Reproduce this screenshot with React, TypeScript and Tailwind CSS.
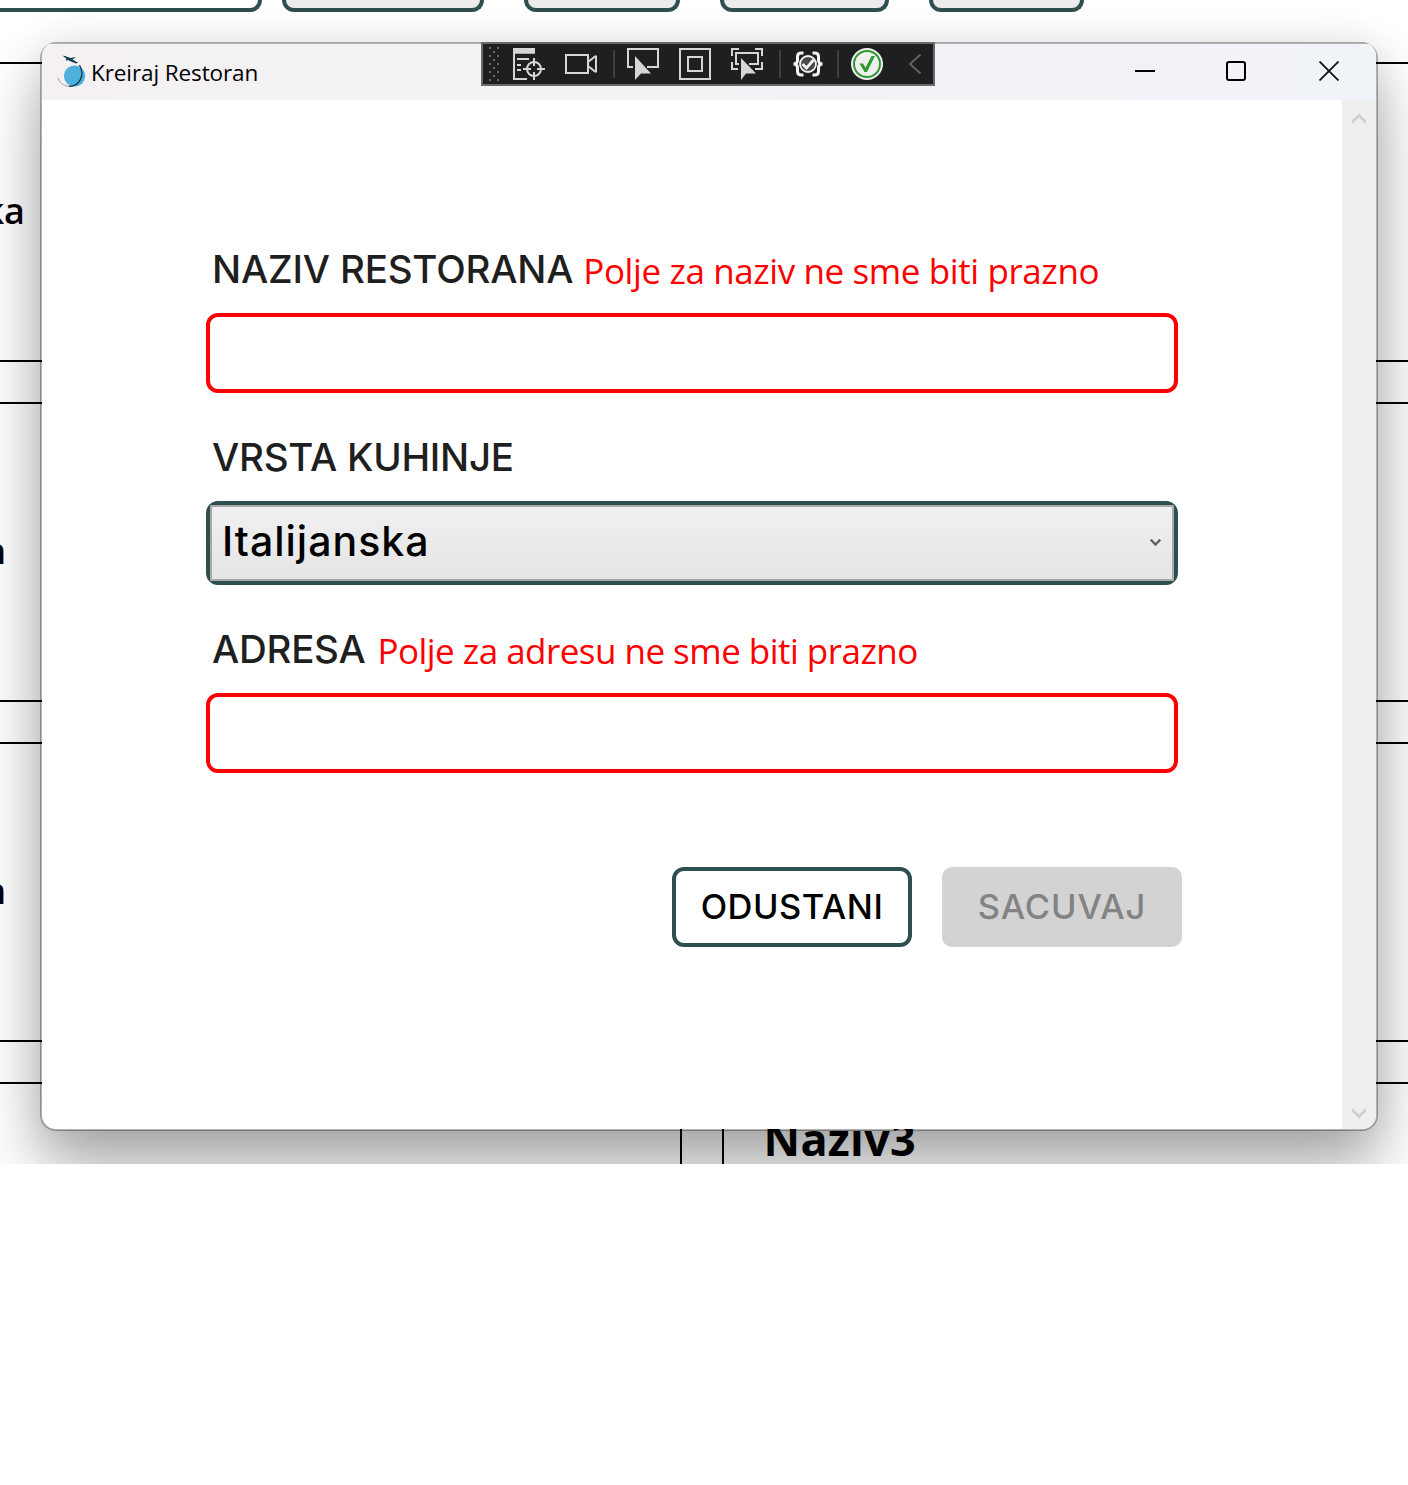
import React from "react";

const SEGOE = "font-['Open_Sans',sans-serif]";
const GEO = "font-['Inter',sans-serif] font-medium";

function Card({ side, children }: { side: "left" | "right"; children?: React.ReactNode }) {
  return (
    <div
      className={
        side === "left"
          ? "-ml-10 flex h-[300px] items-center border-2 border-black pl-[38px]"
          : "-mr-10 h-[300px] border-2 border-black"
      }
    >
      {children}
    </div>
  );
}

function Background() {
  return (
    <div className="h-full w-full overflow-hidden bg-white">
      <div className="flex h-3">
        <div className="w-[262px] rounded-br-xl border-b-4 border-r-4 border-[#2f4f4f]" />
        <div className="ml-5 w-[202px] rounded-b-xl border-4 border-t-0 border-[#2f4f4f] bg-[#ececec]" />
        <div className="ml-10 w-[156px] rounded-b-xl border-4 border-t-0 border-[#2f4f4f] bg-[#ececec]" />
        <div className="ml-10 w-[169px] rounded-b-xl border-4 border-t-0 border-[#2f4f4f] bg-[#ececec]" />
        <div className="ml-10 w-[155px] rounded-b-xl border-4 border-t-0 border-[#2f4f4f] bg-[#ececec]" />
      </div>
      <div className="mt-[50px] grid grid-cols-[682px_1fr] gap-10">
        <Card side="left">
          <div className="mb-0.5 flex w-[25px] justify-end text-[36px] font-semibold leading-[50px]">ka</div>
        </Card>
        <Card side="right" />
        <Card side="left">
          <div className="mb-0.5 flex w-[6px] justify-end text-[36px] font-semibold leading-[50px]">n</div>
        </Card>
        <Card side="right" />
        <Card side="left">
          <div className="mb-0.5 flex w-[6px] justify-end text-[36px] font-semibold leading-[50px]">n</div>
        </Card>
        <Card side="right" />
        <Card side="left" />
        <Card side="right">
          <h2 className="pl-[39.5px] pt-[27px] text-[45px] font-bold leading-[56px] tracking-[0.3px]">Naziv3</h2>
        </Card>
      </div>
    </div>
  );
}

function AppLogo() {
  return (
    <svg width="30" height="34" viewBox="0 0 30 34" fill="none">
      <circle cx="17.6" cy="21" r="10.6" fill="#4db1dc" />
      <path d="M1 23C2.500 29 9.500 32.500 16 31" stroke="#8b9499" strokeWidth=".9" />
      <path d="M12 31.300C22 31.500 28.500 21 22.500 10" stroke="#123c50" strokeWidth="1.300" />
      <path d="M6.500 .5L13.500 3L19 2L15.500 4.400L20.500 7.400L21.500 7L19.500 8.500L15 6.900L11 5L8.500 5.700L9.500 3.700L6.500 1.600Z" fill="#123c50" />
    </svg>
  );
}

function DebugToolbar() {
  return (
    <div className="absolute left-[439px] top-[-2px] flex h-[44px] w-[454px] items-center border-2 border-[#69696b] bg-[#1f1f1f] text-[#d6d6d6]">
      <svg className="ml-[5px] shrink-0" width="12" height="36" viewBox="0 0 12 36" fill="#6b6b6b">
        {[1, 9, 17, 25, 33].map((y) => (
          <g key={y}>
            <rect x="1" y={y} width="2" height="2" />
            <rect x="9" y={y} width="2" height="2" />
            {y < 33 && <rect x="5" y={y + 4} width="2" height="2" />}
          </g>
        ))}
      </svg>
      <svg className="ml-[13px] shrink-0" width="32" height="32" viewBox="0 0 32 32" fill="none" stroke="currentColor" strokeWidth="2">
        <path d="M0 0H22V5.700H0Z" fill="currentColor" stroke="none" />
        <path d="M1 0V31H14M4 11H16M4 17H8M4 22H8" />
        <circle cx="21" cy="21" r="7" />
        <path d="M10 21H18M24 21H32M21 10V18M21 24V32" />
      </svg>
      <svg className="ml-5 shrink-0" width="32" height="32" viewBox="0 0 32 32" fill="none" stroke="currentColor" strokeWidth="2">
        <rect x="1" y="7" width="22" height="18" />
        <path d="M23 14L30 8.500H31V23.500H30L23 18" />
      </svg>
      <div className="ml-4 h-7 w-0.5 shrink-0 bg-[#3d3d3d]" />
      <svg className="ml-3 shrink-0" width="32" height="32" viewBox="0 0 32 32" fill="none" stroke="currentColor" strokeWidth="2">
        <path d="M6 19H1V1H31V19H20" />
        <path d="M8 8V32L14 25.500H24Z" fill="currentColor" stroke="none" />
      </svg>
      <svg className="ml-5 shrink-0" width="32" height="32" viewBox="0 0 32 32" fill="none" stroke="currentColor" strokeWidth="2">
        <rect x="1" y="1" width="30" height="30" />
        <rect x="9" y="9" width="14" height="14" />
      </svg>
      <svg className="ml-5 shrink-0" width="32" height="32" viewBox="0 0 32 32" fill="none" stroke="currentColor" strokeWidth="2">
        <path d="M1 8V1H8M24 1H31V8M31 14V21H24M1 14V21H7" />
        <path d="M8 16H5V5H27V16H18" />
        <path d="M10 10V32L15 25.500H25Z" fill="currentColor" stroke="none" />
      </svg>
      <div className="ml-4 h-7 w-0.5 shrink-0 bg-[#3d3d3d]" />
      <svg className="ml-[11px] shrink-0" width="32" height="32" viewBox="0 0 32 32" fill="none" stroke="#f4f4f4" strokeWidth="3">
        <path d="M11.500 5H9.500C7 5 5.500 6 5.500 8.500V12C5.500 14.500 4.500 16 1.500 16C4.500 16 5.500 17.500 5.500 20V23.500C5.500 26 7 27 9.500 27H11.500" />
        <path d="M20.500 5H22.500C25 5 26.500 6 26.500 8.500V12C26.500 14.500 27.500 16 30.500 16C27.500 16 26.500 17.500 26.500 20V23.500C26.500 26 25 27 22.500 27H20.500" />
        <circle cx="16" cy="16" r="8" fill="#4a4a4a" strokeWidth="1.800" />
        <path d="M10.500 16L14.500 20L21.500 12" strokeWidth="2.800" />
      </svg>
      <div className="ml-[13px] h-7 w-0.5 shrink-0 bg-[#3d3d3d]" />
      <svg className="ml-3 shrink-0" width="32" height="32" viewBox="0 0 32 32" fill="none">
        <circle cx="16" cy="16" r="16" fill="#f0f0f0" />
        <circle cx="16" cy="16" r="13" stroke="#2f9a32" strokeWidth="2" />
        <path d="M8.500 15.500H12L14.500 19.800L20.500 8H24L16 24H13.500Z" fill="#2f9a32" />
      </svg>
      <svg className="ml-[25px] shrink-0" width="14" height="22" viewBox="0 0 14 22" fill="none" stroke="#656565" strokeWidth="1.800">
        <path d="M12.500 1.500L2 11L12.500 20.500" />
      </svg>
    </div>
  );
}

function TitleBar() {
  return (
    <div className="relative flex h-14 shrink-0 items-center bg-linear-to-r from-[#f5f1f3] to-[#f0f3f8] pl-[15px]">
      <AppLogo />
      <span className="ml-[4px] grow pt-0.5 text-[22.5px] leading-8 tracking-[-0.1px]">Kreiraj Restoran</span>
      <DebugToolbar />
      <div className="mb-0.5 flex">
        <div className="flex w-[91px] justify-center">
          <svg width="20" height="20" viewBox="0 0 20 20" stroke="#000" strokeWidth="2"><path d="M0 10H20" /></svg>
        </div>
        <div className="flex w-[92px] justify-center">
          <svg width="20" height="20" viewBox="0 0 20 20" fill="none" stroke="#000" strokeWidth="2"><rect x="1" y="1" width="18" height="18" rx="2" /></svg>
        </div>
        <div className="flex w-[94px] justify-center">
          <svg width="20" height="20" viewBox="0 0 20 20" stroke="#111" strokeWidth="1.800"><path d="M.5 .5L19.500 19.500M19.500 .5L.5 19.500" /></svg>
        </div>
      </div>
    </div>
  );
}

function ScrollBar() {
  return (
    <div className="flex w-[34px] shrink-0 flex-col items-center justify-between bg-[#efefef] pb-[9px] pt-3">
      <svg width="14" height="12" viewBox="0 0 14 12" fill="none" stroke="#d0d0d0" strokeWidth="2.800"><path d="M0 10.500L7 3.500L14 10.500" /></svg>
      <svg width="14" height="12" viewBox="0 0 14 12" fill="none" stroke="#d0d0d0" strokeWidth="2.800"><path d="M0 1.500L7 8.500L14 1.500" /></svg>
    </div>
  );
}

function RestaurantForm() {
  return (
    <form className="ml-[164px] mt-[139px] flex w-[976px] flex-col text-[#1f1f1f]">
      <label className="flex h-[60px] items-baseline gap-[10px] whitespace-nowrap pl-[6px] leading-[60px]">
        <span className={`${GEO} text-[38.5px] tracking-[-0.2px]`}>NAZIV RESTORANA</span>
        <span className="translate-y-px text-[35px] tracking-[-0.4px] text-[#ff0000]">Polje za naziv ne sme biti prazno</span>
      </label>
      <input className="mt-3.5 h-20 w-[972px] rounded-xl border-4 border-[#ff0000] bg-white px-3 text-4xl outline-none" />

      <label className="mt-[34px] flex h-[60px] items-baseline whitespace-nowrap pl-[6px] leading-[60px]">
        <span className={`${GEO} text-[38.5px] tracking-[-0.25px]`}>VRSTA KUHINJE</span>
      </label>
      <div className="mt-3.5 h-[84px] w-[972px] rounded-xl bg-[#2f4f4f] p-1">
        <div className="flex h-full items-center justify-between border-2 border-[#a9a9a9] bg-linear-to-b from-[#f0f0f0] to-[#e5e5e5] pl-2.5 pr-[11px]">
          <span className={`${GEO} mb-1 text-[41px] leading-[60px] tracking-[1px] text-black`}>Italijanska</span>
          <svg className="mb-0.5" width="11" height="9" viewBox="0 0 11 9" fill="none" stroke="#606060" strokeWidth="2.400"><path d="M.7 1.500L5.500 6.500L10.300 1.500" /></svg>
        </div>
      </div>

      <label className="mt-[34px] flex h-[60px] items-baseline gap-[12px] whitespace-nowrap pl-[6px] leading-[60px]">
        <span className={`${GEO} text-[38.5px] tracking-[-0.3px]`}>ADRESA</span>
        <span className="translate-y-px text-[35px] tracking-[-0.53px] text-[#ff0000]">Polje za adresu ne sme biti prazno</span>
      </label>
      <input className="mt-3.5 h-20 w-[972px] rounded-xl border-4 border-[#ff0000] bg-white px-3 text-4xl outline-none" />

      <div className="mt-[94px] flex justify-end gap-[30px]">
        <button type="button" className={`${GEO} h-20 w-60 rounded-xl border-4 border-[#2f4f4f] bg-white text-[34.5px] tracking-[0.5px] text-black`}>
          ODUSTANI
        </button>
        <button type="button" disabled className={`${GEO} h-20 w-60 rounded-[10px] bg-[#d3d3d3] text-[34.5px] tracking-[0.9px] text-[#838383]`}>
          SACUVAJ
        </button>
      </div>
    </form>
  );
}

export default function App() {
  return (
    <div className={`${SEGOE} h-[1485px] w-[1408px] bg-white text-black`}>
      <div className="relative h-[1164px] w-full overflow-hidden">
        <Background />
        <div className="absolute left-[40px] top-[42px] flex h-[1089px] w-[1338px] flex-col rounded-[16px] border-2 border-black/30 bg-white bg-clip-padding shadow-[0_40px_64px_rgba(0,0,0,0.3),0_4px_40px_rgba(0,0,0,0.12)]">
          <div className="flex grow flex-col rounded-[14px] [clip-path:inset(-2px_0_0_0_round_14px)]">
            <TitleBar />
            <div className="flex grow">
              <div className="grow">
                <RestaurantForm />
              </div>
              <ScrollBar />
            </div>
          </div>
        </div>
      </div>
    </div>
  );
}
